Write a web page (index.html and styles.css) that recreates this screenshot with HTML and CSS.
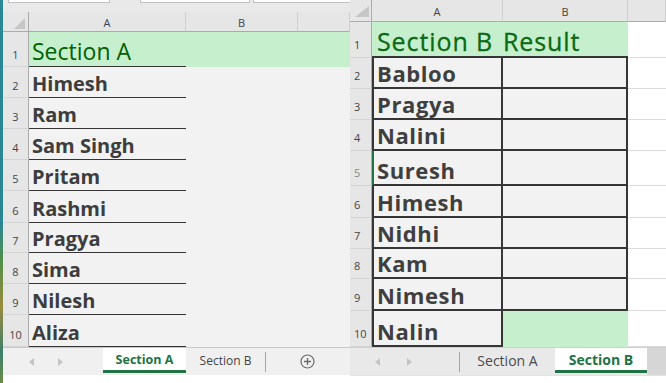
FILE: index.html
```html
<!DOCTYPE html>
<html>
<head>
<meta charset="utf-8">
<link rel="stylesheet" href="styles.css">
</head>
<body>
<div class="screen">
  <div class="left">
    <div class="strip"></div>
    <div class="sheet-a">
      <div class="toolbar">
        <div class="box box1"></div>
        <div class="box box2"></div>
        <div class="box box3"></div>
      </div>
      <div class="grid-a">
        <div class="hd corner"><span class="tri"></span></div>
        <div class="hd">A</div>
        <div class="hd">B</div>
        <div class="hd"></div>

        <div class="rh">1</div>
        <div class="c ca g title">Section A</div>
        <div class="c g"></div>
        <div class="c g"></div>

        <div class="rh">2</div><div class="c ca name">Himesh</div><div class="c"></div><div class="c"></div>
        <div class="rh">3</div><div class="c ca name">Ram</div><div class="c"></div><div class="c"></div>
        <div class="rh">4</div><div class="c ca name">Sam Singh</div><div class="c"></div><div class="c"></div>
        <div class="rh">5</div><div class="c ca name">Pritam</div><div class="c"></div><div class="c"></div>
        <div class="rh">6</div><div class="c ca name">Rashmi</div><div class="c"></div><div class="c"></div>
        <div class="rh">7</div><div class="c ca name">Pragya</div><div class="c"></div><div class="c"></div>
        <div class="rh">8</div><div class="c ca name">Sima</div><div class="c"></div><div class="c"></div>
        <div class="rh">9</div><div class="c ca name">Nilesh</div><div class="c"></div><div class="c"></div>
        <div class="rh">10</div><div class="c ca name">Aliza</div><div class="c"></div><div class="c"></div>
      </div>
      <div class="tabs tabs-a">
        <div class="nav nav-a">
          <svg width="6" height="8" viewBox="0 0 6 8"><polygon points="5,0 0,4 5,8" fill="#c4c4c4"/></svg>
          <svg width="6" height="8" viewBox="0 0 6 8"><polygon points="1,0 6,4 1,8" fill="#c4c4c4"/></svg>
        </div>
        <div class="tab active active-a">Section A</div>
        <div class="tab tab-a2">Section B</div>
        <div class="sep"></div>
        <div class="plus">
          <svg width="15" height="15" viewBox="0 0 15 15"><circle cx="7.5" cy="7.5" r="6.5" fill="none" stroke="#6b6b6b" stroke-width="1.2"/><path d="M7.5 4v7M4 7.5h7" stroke="#6b6b6b" stroke-width="1.3"/></svg>
        </div>
      </div>
      <div class="foot"></div>
    </div>
  </div>

  <div class="right">
    <div class="grid-b">
      <div class="hd corner"><span class="tri tri-b"></span></div>
      <div class="hd">A</div>
      <div class="hd">B</div>
      <div class="hd"></div>

      <div class="rh rhb">1</div>
      <div class="c g rtitle t1">Section B</div>
      <div class="c g rtitle t1 tb">Result</div>
      <div class="w"></div>

      <div class="rh rhb">2</div><div class="c ta rname">Babloo</div><div class="c tb2"></div><div class="w"></div>
      <div class="rh rhb">3</div><div class="c ta rname">Pragya</div><div class="c tb2"></div><div class="w"></div>
      <div class="rh rhb">4</div><div class="c ta rname">Nalini</div><div class="c tb2"></div><div class="w"></div>
      <div class="rh rhb sel">5</div><div class="c ta ta-sel rname">Suresh</div><div class="c tb2"></div><div class="w"></div>
      <div class="rh rhb">6</div><div class="c ta rname">Himesh</div><div class="c tb2"></div><div class="w"></div>
      <div class="rh rhb">7</div><div class="c ta rname">Nidhi</div><div class="c tb2"></div><div class="w"></div>
      <div class="rh rhb">8</div><div class="c ta rname">Kam</div><div class="c tb2"></div><div class="w"></div>
      <div class="rh rhb">9</div><div class="c ta rname">Nimesh</div><div class="c tb2"></div><div class="w"></div>
      <div class="rh rhb">10</div><div class="c ta rname">Nalin</div><div class="c g"></div><div class="w"></div>
    </div>
    <div class="tabs tabs-b">
      <div class="nav nav-b">
        <svg width="6" height="8" viewBox="0 0 6 8"><polygon points="5,0 0,4 5,8" fill="#c4c4c4"/></svg>
        <svg width="6" height="8" viewBox="0 0 6 8"><polygon points="1,0 6,4 1,8" fill="#c4c4c4"/></svg>
      </div>
      <div class="sep sep-b"></div>
      <div class="tab tab-b1">Section A</div>
      <div class="tab active active-b">Section B</div>
      <div class="rest"></div>
    </div>
    <div class="foot foot-b"></div>
  </div>
</div>
</body>
</html>
```

FILE: styles.css
```css
* { box-sizing: border-box; }
html, body { margin: 0; padding: 0; }
body {
  width: 666px;
  height: 383px;
  overflow: hidden;
  background: #fff;
  font-family: "Open Sans", "DejaVu Sans", sans-serif;
}
.screen { display: flex; width: 666px; height: 383px; }

.left { display: flex; width: 350px; height: 383px; }
.strip {
  width: 3px;
  background: linear-gradient(to bottom, #2b8696 0%, #2b8696 58%, #4f8f4a 68%, #9a8b3c 80%, #3d7f6a 92%, #6c8c44 100%);
}
.sheet-a { width: 347px; display: flex; flex-direction: column; }

.toolbar {
  height: 12px;
  background: #e9e9e9;
  display: flex;
  align-items: flex-start;
}
.box {
  height: 3px;
  background: #fff;
  border: 1px solid #c2c2c2;
  border-top: none;
}
.box1 { margin-left: 5px; width: 102px; }
.box2 { margin-left: 30px; width: 110px; }
.box3 { margin-left: 3px; flex: 1; border-right: none; }

.grid-a {
  display: grid;
  grid-template-columns: 26px 157px 112px 52px;
  grid-template-rows: 20px 35px 31px 31px 31px 31px 32px 30px 31px 31px 32px;
}
.grid-b {
  display: grid;
  grid-template-columns: 22px 131px 125px 38px;
  grid-template-rows: 22px 36px 31px 31px 31px 35px 32px 31px 30px 32px 36px;
}

.hd {
  background: #e6e6e6;
  border-bottom: 1px solid #ababab;
  border-right: 1px solid #cfcfcf;
  font-size: 11px;
  color: #444;
  display: flex;
  align-items: center;
  justify-content: center;
  line-height: 1;
  padding-top: 1px;
}
.corner { position: relative; border-right: 1px solid #ababab; }
.tri {
  position: absolute;
  right: 3px;
  bottom: 2px;
  width: 11px;
  height: 11px;
  background: #c6c6c6;
  clip-path: polygon(100% 0, 100% 100%, 0 100%);
}
.tri-b { right: 2px; bottom: 4px; width: 14px; height: 11px; }

.rh {
  background: #e6e6e6;
  border-right: 1px solid #ababab;
  border-bottom: 1px solid #d4d4d4;
  font-size: 11px;
  color: #444;
  display: flex;
  align-items: flex-end;
  justify-content: center;
  padding-bottom: 6px;
  line-height: 1;
}
.rhb { justify-content: flex-start; padding-left: 4px; padding-bottom: 7px; }
.sel { color: #8a8a8a; }

.c {
  background: #f2f2f2;
  display: flex;
  align-items: flex-end;
  white-space: nowrap;
}
.g { background: #c6efce; }
.ca { border-bottom: 1px solid #343434; padding-left: 3px; }
.title {
  font-size: 23px;
  line-height: 23px;
  color: #006100;
  padding-bottom: 3px;
}
.name {
  font-size: 20px;
  line-height: 20px;
  font-weight: 700;
  color: #3d3d3d;
  padding-bottom: 3px;
}

.w { background: #fff; border-bottom: 1px solid #dcdcdc; }

.t1 {
  border-bottom: 2px solid #363636;
}
.rtitle {
  font-size: 25px;
  line-height: 25px;
  color: #0a6a14;
  padding-left: 5px;
  padding-bottom: 2px;
  letter-spacing: 0.9px;
  -webkit-text-stroke: 0.3px #0a6a14;
}
.tb { padding-left: 0; }
.ta {
  border-left: 2px solid #363636;
  border-right: 2px solid #363636;
  border-bottom: 2px solid #363636;
  padding-left: 3px;
}
.ta-sel { border-left-color: #217346; }
.tb2 {
  border-right: 2px solid #363636;
  border-bottom: 2px solid #363636;
}
.rname {
  font-size: 22px;
  line-height: 22px;
  font-weight: 700;
  color: #3f3f3f;
  padding-bottom: 3px;
  letter-spacing: 0.6px;
}

.tabs {
  height: 28px;
  display: flex;
  align-items: stretch;
  border-top: 1px solid #c8c8c8;
}
.tabs-a { background: #f0f0f0; }
.tabs-b { background: #e9e9e9; border-top-color: #cfcfcf; }
.nav {
  display: flex;
  align-items: center;
}
.nav-a { width: 100px; padding-left: 26px; gap: 22px; }
.nav-b { width: 109px; padding-left: 25px; gap: 25px; }
.tab {
  display: flex;
  align-items: center;
  justify-content: center;
  font-size: 12px;
  color: #444;
  padding-bottom: 2px;
}
.active {
  background: #fff;
  color: #217346;
  font-weight: 700;
  border-bottom: 3px solid #217346;
  margin-bottom: 2px;
  padding-bottom: 0;
}
.active-a { width: 83px; font-size: 12.5px; }
.tab-a2 { width: 79px; }
.sep { width: 1px; background: #a6a6a6; margin: 4px 0 3px; }
.plus { display: flex; align-items: center; padding-left: 34px; }

.tab-b1 { width: 95px; font-size: 14px; color: #4a4a4a; }
.active-b { width: 92px; font-size: 14px; }
.rest { flex: 1; background: #d6d6d6; }

.foot { height: 8px; background: #fff; }
.foot-b { border-top: 1px solid #e2e2e2; }

.right { width: 316px; display: flex; flex-direction: column; }
```
